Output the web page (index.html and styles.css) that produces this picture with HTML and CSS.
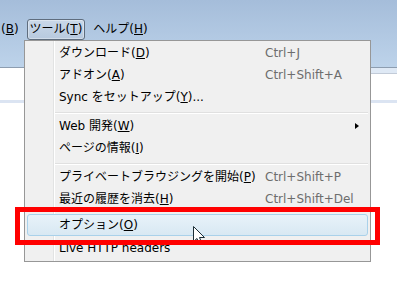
FILE: index.html
```html
<!DOCTYPE html>
<html lang="ja">
<head>
  <meta charset="UTF-8">
  <title>ツール メニュー</title>
  <link rel="stylesheet" href="styles.css">
</head>
<body>
  <div class="window">
    <div class="menubar">
      <span class="menu first">(<u>B</u>)</span>
      <span class="menu open">ツール(<u>T</u>)</span>
      <span class="menu">ヘルプ(<u>H</u>)</span>
    </div>
    <div class="chrome"><div class="band"></div></div>
    <div class="content"><div class="toolbar-edge"></div></div>

    <div class="dropdown">
      <div class="item"><span>ダウンロード(<u>D</u>)</span><span class="key">Ctrl+J</span></div>
      <div class="item"><span>アドオン(<u>A</u>)</span><span class="key">Ctrl+Shift+A</span></div>
      <div class="item"><span>Sync をセットアップ(<u>Y</u>)...</span></div>
      <div class="sep"></div>
      <div class="item"><span>Web 開発(<u>W</u>)</span><span class="arrow"></span></div>
      <div class="item"><span>ページの情報(<u>I</u>)</span></div>
      <div class="sep"></div>
      <div class="item"><span>プライベートブラウジングを開始(<u>P</u>)</span><span class="key">Ctrl+Shift+P</span></div>
      <div class="item"><span>最近の履歴を消去(<u>H</u>)</span><span class="key">Ctrl+Shift+Del</span></div>
      <div class="item hover"><span>オプション(<u>O</u>)</span></div>
      <div class="item"><span>Live HTTP headers</span></div>
    </div>

    <svg class="cursor" width="14" height="20" viewBox="0 0 14 20">
      <path d="M0.5 0.5 L0.5 15.5 L4 12.5 L6.5 18.5 L9 17.5 L6.5 11.5 L11.5 11.5 Z" fill="#fff" stroke="#1c2e36" stroke-width="1"/>
    </svg>
    <div class="callout"></div>
  </div>
</body>
</html>
```

FILE: styles.css
```css
body {
  margin: 0;
  font-family: "DejaVu Sans", "Noto Sans CJK JP", sans-serif;
  font-size: 12px;
  color: #000;
  overflow: hidden;
}

.window {
  position: relative;
  width: 397px;
  height: 283px;
  background: #fff;
}

u {
  text-decoration: underline;
  text-underline-offset: 1px;
}

/* menu bar */
.menubar {
  height: 67px;
  box-sizing: border-box;
  padding-top: 19px;
  display: flex;
  align-items: flex-start;
  gap: 5px;
  background: linear-gradient(#a5bdda, #bdd3ea);
}

.menu {
  height: 21px;
  box-sizing: border-box;
  line-height: 19px;
  padding: 0 2px;
  border: 1px solid transparent;
  border-radius: 3px;
  white-space: nowrap;
}

.menu.first {
  margin-left: -2px;
}

.menu.open {
  border-color: #5f6d7e;
  background: linear-gradient(#cad8e9, #b7c9de);
  box-shadow: inset 0 0 0 1px rgba(255, 255, 255, 0.35);
}

.chrome {
  border-top: 1px solid #8d9db0;
}

.band {
  height: 5px;
  margin-left: 24px;
  background: #dfe9f5;
  border-bottom: 1px solid #c2cbd8;
}

.content {
  padding-top: 26px;
}

.toolbar-edge {
  height: 3px;
  background: #dbe4f2;
}

/* drop-down */
.dropdown {
  position: absolute;
  left: 24px;
  top: 40px;
  width: 347px;
  height: 222px;
  box-sizing: border-box;
  border: 1px solid #979797;
  padding: 1px 0 2px;
  background:
    linear-gradient(to right, transparent 28px, #e2e3e3 28px, #e2e3e3 29px, #fff 29px, #fff 30px, transparent 30px),
    #f0f0f0;
}

.item {
  display: grid;
  grid-template-columns: 206px 1fr;
  align-items: center;
  height: 22px;
  box-sizing: border-box;
  line-height: 20px;
  margin: 0 2px;
  padding-left: 31px;
  border: 1px solid transparent;
  border-radius: 3px;
  white-space: nowrap;
}

.item .key {
  font-family: "DejaVu Sans", sans-serif;
  color: #6d6d6d;
}

.item .arrow {
  justify-self: end;
  margin-right: 8px;
  width: 0;
  height: 0;
  border-left: 4px solid #000;
  border-top: 3.5px solid transparent;
  border-bottom: 3.5px solid transparent;
}

.item.hover {
  margin-top: 4px;
  margin-bottom: 1px;
  border-color: #a9d1ea;
  background: linear-gradient(#e8f2f9, #d8e8f3);
}

.sep {
  height: 7px;
  margin: 0 2px 0 30px;
  background: linear-gradient(transparent 4px, #e0e0e0 4px, #e0e0e0 5px, #fff 5px, #fff 6px, transparent 6px);
}

/* overlays */
.cursor {
  position: absolute;
  left: 193px;
  top: 226px;
}

.callout {
  position: absolute;
  left: 15px;
  top: 207px;
  width: 365px;
  height: 38px;
  box-sizing: border-box;
  border: 5px solid #ff0000;
}
```
